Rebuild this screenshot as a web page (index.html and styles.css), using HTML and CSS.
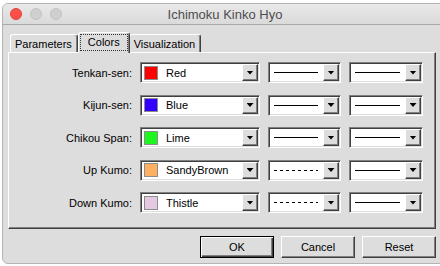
FILE: index.html
```html
<!DOCTYPE html>
<html lang="en">
  <head>
    <meta charset="UTF-8" />
    <meta name="viewport" content="width=device-width, initial-scale=1.0" />
    <title>Ichimoku Kinko Hyo</title>
    <link rel="stylesheet" href="styles.css">
  </head>
  <body>
    <div class="window">
      <!-- Title bar -->
      <div class="titlebar">
        <div class="lights">
          <span class="light close"></span>
          <span class="light"></span>
          <span class="light"></span>
        </div>
        <div class="title">Ichimoku Kinko Hyo</div>
        <div></div>
      </div>

      <!-- Tabs -->
      <div class="tabs">
        <div class="tab">Parameters</div>
        <div class="tab selected"><span class="focus">Colors</span></div>
        <div class="tab">Visualization</div>
      </div>

      <div class="panel">
        <div class="rows" id="rows"></div>
      </div>

      <div class="buttons">
        <button class="btn default">OK</button>
        <button class="btn">Cancel</button>
        <button class="btn">Reset</button>
      </div>
    </div>

    <script>
      const lines = [
        { label: "Tenkan-sen:", name: "Red", color: "#ff0000", style: "solid" },
        { label: "Kijun-sen:", name: "Blue", color: "#3300ff", style: "solid" },
        { label: "Chikou Span:", name: "Lime", color: "#1ff51f", style: "solid" },
        { label: "Up Kumo:", name: "SandyBrown", color: "#fdb062", style: "dashed" },
        { label: "Down Kumo:", name: "Thistle", color: "#e5c9e2", style: "dashed" }
      ];

      const rows = document.getElementById("rows");

      lines.forEach((line) => {
        rows.insertAdjacentHTML("beforeend", `
          <div class="label">${line.label}</div>
          <div class="combo">
            <span class="swatch" style="background: ${line.color}"></span>
            <span class="name">${line.name}</span>
            <span class="arrow"></span>
          </div>
          <div class="combo">
            <span class="line ${line.style}"></span>
            <span class="arrow"></span>
          </div>
          <div class="combo">
            <span class="line solid"></span>
            <span class="arrow"></span>
          </div>
        `);
      });
    </script>
  </body>
</html>
```

FILE: styles.css
```css
body {
  margin: 0;
  background: #fff;
  overflow: hidden;
  font-family: "Liberation Sans", Arial, sans-serif;
  font-size: 11px;
  color: #000;
}

.window {
  margin: 3px 0 0 2px;
  width: 446px;
  height: 261px;
  box-sizing: border-box;
  background: #dddddd;
  border: 1px solid #b4b4b4;
  border-radius: 6px;
  overflow: hidden;
}

.titlebar {
  height: 20px;
  display: grid;
  grid-template-columns: 1fr auto 1fr;
  align-items: center;
  background: linear-gradient(#e9e9e9, #dadada);
  border-bottom: 1px solid #a9a9a9;
}

.lights {
  display: flex;
  gap: 8px;
  padding-left: 7px;
}

.light {
  width: 12px;
  height: 12px;
  box-sizing: border-box;
  border-radius: 50%;
  background: #cfcfcf;
  border: 1px solid #c2c2c2;
}

.light.close {
  background: #fc4f4a;
  border-color: #e2403b;
}

.title {
  font-size: 13px;
  color: #4d4d4d;
}

.tabs {
  height: 27px;
  display: flex;
  align-items: flex-end;
  padding-left: 7px;
}

.tab {
  height: 18px;
  box-sizing: border-box;
  padding: 0 5px 0 4px;
  display: flex;
  align-items: center;
  border: 1px solid #fff;
  border-bottom: none;
  border-right-color: #404040;
  border-radius: 3px 3px 0 0;
  box-shadow: inset -1px 0 #808080;
}

.tab.selected {
  height: 21px;
  margin: 0 -1px -1px 0;
  padding: 0 1px 2px;
  background: #dddddd;
  position: relative;
  z-index: 1;
}

.focus {
  border: 1px dotted #333;
  padding: 1px 7px 2px;
}

.panel {
  margin-left: 5px;
  width: 428px;
  height: 177px;
  box-sizing: border-box;
  padding: 9px 0 0;
  border: 1px solid #fff;
  border-right-color: #404040;
  border-bottom-color: #404040;
  box-shadow: inset -1px -1px #808080;
}

.rows {
  display: grid;
  grid-template-columns: 123px 120px 73px 74px;
  grid-auto-rows: 21px;
  column-gap: 8px;
  row-gap: 11.5px;
  align-items: center;
}

.label {
  text-align: right;
}

.combo {
  height: 21px;
  box-sizing: border-box;
  display: flex;
  align-items: center;
  background: #fff;
  border: 1px solid;
  border-color: #808080 #fff #fff #808080;
  box-shadow: inset 1px 1px #404040, inset -1px -1px #dddddd;
  padding: 1px;
}

.swatch {
  width: 14px;
  height: 14px;
  box-sizing: border-box;
  margin-left: 2px;
  border: 1px solid #8c8c8c;
}

.name {
  margin-left: 8px;
  flex: 1;
}

.line {
  flex: 1;
  height: 1px;
  margin: 0 5px 0 4px;
}

.line.solid {
  background: #000;
}

.line.dashed {
  background: repeating-linear-gradient(to right, #000 0 3px, transparent 3px 6px);
}

.arrow {
  width: 16px;
  height: 17px;
  box-sizing: border-box;
  display: flex;
  align-items: center;
  justify-content: center;
  background: #dddddd;
  border: 1px solid;
  border-color: #fff #404040 #404040 #fff;
  box-shadow: inset -1px -1px #808080;
}

.arrow::after {
  content: "";
  width: 7px;
  height: 4px;
  background: #000;
  clip-path: polygon(0 0, 100% 0, 50% 100%);
}

.buttons {
  margin: 7px 0 0 5px;
  width: 428px;
  display: flex;
  justify-content: flex-end;
  gap: 7px;
}

.btn {
  width: 74px;
  height: 22px;
  box-sizing: border-box;
  background: #dddddd;
  font-family: "Liberation Sans", Arial, sans-serif;
  font-size: 11px;
  color: #000;
  border: 1px solid;
  border-color: #fff #404040 #404040 #fff;
  box-shadow: inset -1px -1px #808080;
  padding: 0;
}

.btn.default {
  border-color: #000;
  box-shadow: inset 1px 1px #fff, inset -1px -1px #404040, inset -2px -2px #808080;
}
```
